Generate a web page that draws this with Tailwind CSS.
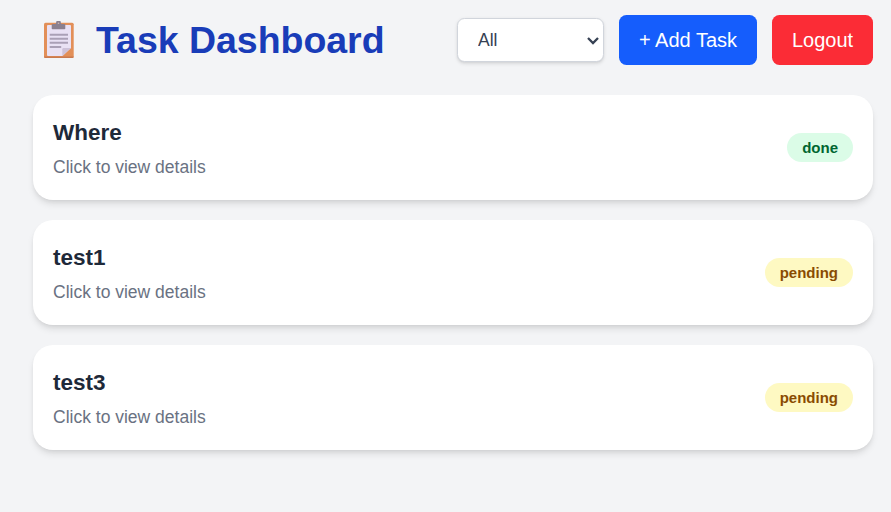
<!DOCTYPE html>
<html lang="en">
<head>
<meta charset="utf-8">
<title>Task Dashboard</title>
<script src="https://cdn.jsdelivr.net/npm/@tailwindcss/browser@4"></script>
</head>
<body class="min-h-screen bg-gray-100 pt-[15px] pl-[33px] pr-[18px] font-['Liberation_Sans',Arial,sans-serif]">
<header class="flex h-[50px] items-center justify-between mb-[30px]">
  <h1 class="flex items-center text-[37.5px] leading-[45px] font-bold tracking-[-0.03px] text-blue-800">
    <svg class="ml-[11px] mr-[22px] h-[38px] w-[30px]" viewBox="0 0 30 38" fill="none">
      <rect x="0" y="1.800" width="29.700" height="35.200" rx="1.500" fill="#e28f58"/>
      <path d="M0 35.500h29.700a1.500 1.500 0 0 1-1.500 1.500H1.500A1.500 1.500 0 0 1 0 35.500z" fill="#c9794f"/>
      <path d="M4 4h22a1 1 0 0 1 1 1v22l-8.500 8H4a1 1 0 0 1-1-1V5a1 1 0 0 1 1-1z" fill="#e9e1f4"/>
      <path d="M27 27h-7.500a1.200 1.200 0 0 0-1.200 1.200V35z" fill="#cdc1d8"/>
      <path d="M5.700 13.800h18.300M5.700 17.700h18.300M5.700 21.800h18.300M5.700 26h11.500" stroke="#aaa0b6" stroke-width="1.900"/>
      <path d="M8.700 3h3c.3-.5.300-.8.400-1.200a2.400 2.400 0 0 1 4.800 0c.1.400.1.700.4 1.200h3a1 1 0 0 1 1 1v3.500a.8.800 0 0 1-.8.800H8.500a.8.800 0 0 1-.8-.8V4a1 1 0 0 1 1-1z" fill="#8b808f"/>
      <circle cx="14.500" cy="2.300" r=".8" fill="#d0b9b5"/>
    </svg>
    Task Dashboard
  </h1>
  <div class="flex items-center gap-[15px]">
    <div class="relative h-[44px] w-[147px]">
      <select class="h-full w-full appearance-none rounded-[7.5px] border border-gray-300 bg-white pl-5 text-[17.5px] leading-[25px] text-gray-700 shadow-[0_1.25px_3.75px_rgba(0,0,0,0.1),0_1.25px_2.5px_-1.25px_rgba(0,0,0,0.1)]">
        <option>All</option><option>Pending</option><option>Done</option>
      </select>
      <svg class="pointer-events-none absolute right-[5px] top-[18px] h-[10px] w-[12px]" viewBox="0 0 12 10" fill="none" stroke="#364153" stroke-width="2.3"><path d="M1 2l5 5 5-5"/></svg>
    </div>
    <button class="h-[50px] w-[138px] rounded-[7.5px] bg-[#155dfc] text-[20px] text-white whitespace-nowrap">+ Add Task</button>
    <button class="h-[50px] w-[101px] rounded-[7.5px] bg-[#fb2c36] text-[20px] text-white">Logout</button>
  </div>
</header>
<main class="grid gap-5">
  <article class="flex h-[105px] items-center justify-between rounded-[20px] bg-white px-5 shadow-[0_5px_7.5px_-1.25px_rgba(0,0,0,0.1),0_2.5px_5px_-2.5px_rgba(0,0,0,0.1)]">
    <div><h2 class="text-[22.5px] leading-[35px] font-bold text-gray-800">Where</h2><p class="mt-[5px] text-[17.5px] leading-[25px] text-gray-500">Click to view details</p></div>
    <span class="rounded-full bg-green-100 px-[15px] h-[29px] text-[15px] leading-[29px] font-bold text-green-800">done</span>
  </article>
  <article class="flex h-[105px] items-center justify-between rounded-[20px] bg-white px-5 shadow-[0_5px_7.5px_-1.25px_rgba(0,0,0,0.1),0_2.5px_5px_-2.5px_rgba(0,0,0,0.1)]">
    <div><h2 class="text-[22.5px] leading-[35px] font-bold text-gray-800">test1</h2><p class="mt-[5px] text-[17.5px] leading-[25px] text-gray-500">Click to view details</p></div>
    <span class="rounded-full bg-yellow-100 px-[15px] h-[29px] text-[15px] leading-[29px] font-bold text-yellow-800">pending</span>
  </article>
  <article class="flex h-[105px] items-center justify-between rounded-[20px] bg-white px-5 shadow-[0_5px_7.5px_-1.25px_rgba(0,0,0,0.1),0_2.5px_5px_-2.5px_rgba(0,0,0,0.1)]">
    <div><h2 class="text-[22.5px] leading-[35px] font-bold text-gray-800">test3</h2><p class="mt-[5px] text-[17.5px] leading-[25px] text-gray-500">Click to view details</p></div>
    <span class="rounded-full bg-yellow-100 px-[15px] h-[29px] text-[15px] leading-[29px] font-bold text-yellow-800">pending</span>
  </article>
</main>
</body>
</html>
